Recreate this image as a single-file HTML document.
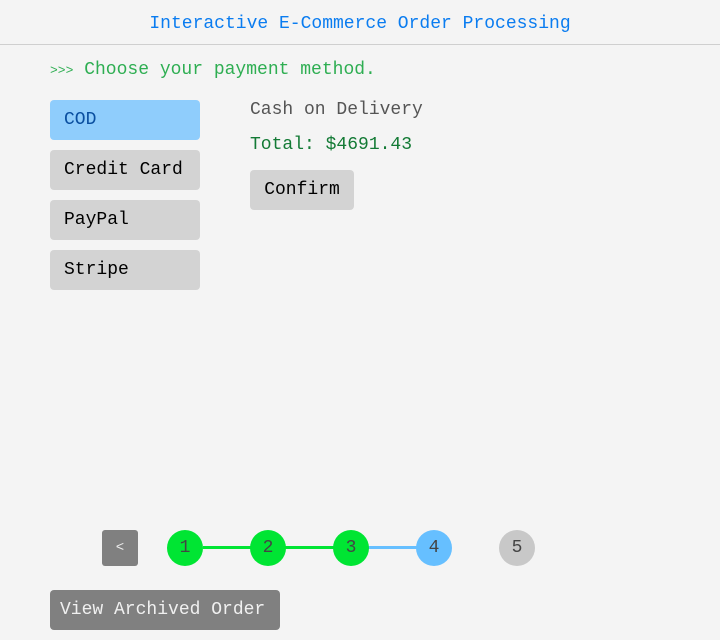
<!DOCTYPE html>
<html><head><style>
body{margin:0;width:720px;height:640px;background:#f4f4f4;font-family:"Liberation Mono",monospace;font-size:18px;position:relative;overflow:hidden}
.a{position:absolute;white-space:nowrap}
.btn{position:absolute;left:50px;width:150px;height:40px;border-radius:4px;background:#d3d3d3;color:#000;line-height:40px;box-sizing:border-box;padding-left:14px}
.c{position:absolute;top:530px;width:36px;height:36px;border-radius:50%;text-align:center;line-height:37px;color:#444}
</style></head><body>
<div class="a" style="left:0;width:720px;top:14px;text-align:center;color:#0a7cf0;font-size:18px">Interactive E-Commerce Order Processing</div>
<div class="a" style="left:0;top:44px;width:720px;height:1px;background:#cfcfcf"></div>
<div class="a" style="left:50px;top:60px;color:#2eae52"><span style="font-size:13px">&gt;&gt;&gt;</span> Choose your payment method.</div>
<div class="btn" style="top:100px;background:#8fcdfc;color:#0a4fa0">COD</div>
<div class="btn" style="top:150px">Credit Card</div>
<div class="btn" style="top:200px">PayPal</div>
<div class="btn" style="top:250px">Stripe</div>
<div class="a" style="left:250px;top:100px;color:#555">Cash on Delivery</div>
<div class="a" style="left:250px;top:135px;color:#137a35">Total: $4691.43</div>
<div class="a" style="left:250px;top:170px;width:104px;height:40px;background:#d3d3d3;border-radius:4px;line-height:40px;text-align:center;color:#000">Confirm</div>
<div class="a" style="left:102px;top:530px;width:36px;height:36px;background:#808080;border-radius:3px;color:#eee;text-align:center;line-height:36px;font-size:14px">&lt;</div>
<div class="a" style="left:203px;top:546px;width:150px;height:3px;background:#00e533"></div>
<div class="a" style="left:353px;top:546px;width:70px;height:3px;background:#66bfff"></div>
<div class="c" style="left:167px;background:#00e533">1</div>
<div class="c" style="left:250px;background:#00e533">2</div>
<div class="c" style="left:333px;background:#00e533">3</div>
<div class="c" style="left:416px;background:#66bfff">4</div>
<div class="c" style="left:499px;background:#c8c8c8">5</div>
<div class="a" style="left:50px;top:590px;width:230px;height:40px;background:#808080;border-radius:4px;color:#f0f0f0;line-height:40px;padding-left:10px;box-sizing:border-box">View Archived Order</div>
</body></html>
